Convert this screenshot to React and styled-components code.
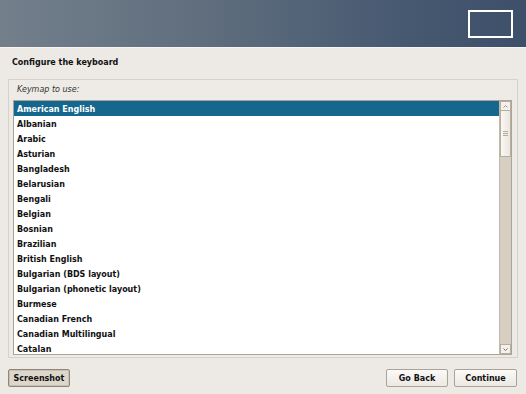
import React from "react";
import styled, { createGlobalStyle } from "styled-components";

const Global = createGlobalStyle`
  html, body { margin: 0; padding: 0; }
  body {
    width: 526px; height: 394px; overflow: hidden;
    background: #edeae6;
    font-family: "DejaVu Sans", "Liberation Sans", sans-serif;
  }
`;

const Page = styled.div`
  width: 526px; height: 394px;
  display: flex; flex-direction: column;
  background: #edeae6;
`;

const Header = styled.div`
  height: 48px;
  flex: none;
  background: linear-gradient(90deg, #737f8b 0%, #5f6d7d 40%, #485a72 75%, #3e5069 100%);
  border-bottom: 1px solid #f7f5f2;
  display: flex; justify-content: flex-end; align-items: flex-start;
  padding: 10px 13px 0 0;
  box-sizing: border-box;
`;

const Logo = styled.div`
  width: 45px; height: 28px;
  box-sizing: border-box;
  border: 2px solid #ffffff;
`;

const Title = styled.h1`
  margin: 0;
  padding: 9px 12px 0 12px;
  height: 21px;
  font-size: 8px; font-weight: bold; color: #111;
  line-height: 12px;
`;

const Frame = styled.div`
  margin: 1px 8px 0 8px;
  border: 1px solid #d6d1ca;
  background: #eeebe7;
  padding: 4px 5px 2px 4px;
  display: flex; flex-direction: column;
  height: 279px;
  box-sizing: border-box;
`;

const Label = styled.div`
  font-size: 8px; font-style: italic; color: #333;
  padding: 1px 0 0 4px;
  height: 15px;
  line-height: 10px;
`;

const ListBox = styled.div`
  flex: 1;
  display: flex;
  border: 1px solid #a9a49c;
  background: #fff;
  overflow: hidden;
`;

const Rows = styled.div`
  flex: 1;
  display: flex; flex-direction: column;
  overflow: hidden;
`;

const Row = styled.div`
  height: 15px; flex: none;
  box-sizing: border-box;
  padding: 2px 0 0 3px;
  line-height: 13px;
  font-size: 8px; font-weight: bold;
  color: ${p => (p.$sel ? "#fff" : "#111")};
  background: ${p => (p.$sel ? "#15678e" : "transparent")};
  white-space: nowrap;
`;

const Scroll = styled.div`
  width: 11px; flex: none;
  background: #d8cfc3;
  border-left: 1px solid #c2b8ab;
  display: flex; flex-direction: column;
`;

const Arrow = styled.div`
  height: 10px; flex: none;
  background: #f4f1ec;
  border: 1px solid #b8ae9f;
  box-sizing: border-box;
  display: flex; align-items: center; justify-content: center;
`;

const Thumb = styled.div`
  height: 46px; flex: none;
  background: linear-gradient(90deg, #faf8f5, #ebe6df);
  border: 1px solid #b8ae9f;
  border-top: none;
  box-sizing: border-box;
  display: flex; flex-direction: column; align-items: center; justify-content: center; gap: 1px;
`;

const Grip = styled.div`
  width: 5px; height: 1px; background: #b4aa9c;
`;

const Spacer = styled.div` flex: 1; `;

const Footer = styled.div`
  display: flex; align-items: center;
  padding: 11px 9px 0 8px;
  gap: 6px;
`;

const Button = styled.button`
  height: 18px;
  width: ${p => p.$w}px;
  padding: 0;
  font-family: "DejaVu Sans", sans-serif;
  font-size: 8px; font-weight: bold; color: #111;
  background: ${p => (p.$pressed ? "#ddd6cb" : "linear-gradient(#fbfaf8, #ece8e2)")};
  border: 1px solid ${p => (p.$pressed ? "#8f877b" : "#a9a398")};
  border-radius: 2px;
  box-shadow: ${p => (p.$pressed ? "inset 0 0 0 1px #c9c0b3" : "none")};
`;

const items = [
  "American English", "Albanian", "Arabic", "Asturian", "Bangladesh", "Belarusian",
  "Bengali", "Belgian", "Bosnian", "Brazilian", "British English",
  "Bulgarian (BDS layout)", "Bulgarian (phonetic layout)", "Burmese",
  "Canadian French", "Canadian Multilingual", "Catalan",
];

export default function App() {
  return (
    <Page>
      <Global />
      <Header><Logo /></Header>
      <Title>Configure the keyboard</Title>
      <Frame>
        <Label>Keymap to use:</Label>
        <ListBox>
          <Rows>
            {items.map((t, i) => <Row key={t} $sel={i === 0}>{t}</Row>)}
          </Rows>
          <Scroll>
            <Arrow>
              <svg width="5" height="3" viewBox="0 0 5 3"><path d="M0.5 2.5 L2.5 0.5 L4.5 2.5" fill="none" stroke="#8a8174" strokeWidth="0.8" /></svg>
            </Arrow>
            <Thumb><Grip /><Grip /><Grip /></Thumb>
            <Spacer />
            <Arrow>
              <svg width="5" height="3" viewBox="0 0 5 3"><path d="M0.5 0.5 L2.5 2.5 L4.5 0.5" fill="none" stroke="#5a5248" strokeWidth="0.8" /></svg>
            </Arrow>
          </Scroll>
        </ListBox>
      </Frame>
      <Footer>
        <Button $w={62} $pressed>Screenshot</Button>
        <Spacer />
        <Button $w={62}>Go Back</Button>
        <Button $w={63}>Continue</Button>
      </Footer>
    </Page>
  );
}
